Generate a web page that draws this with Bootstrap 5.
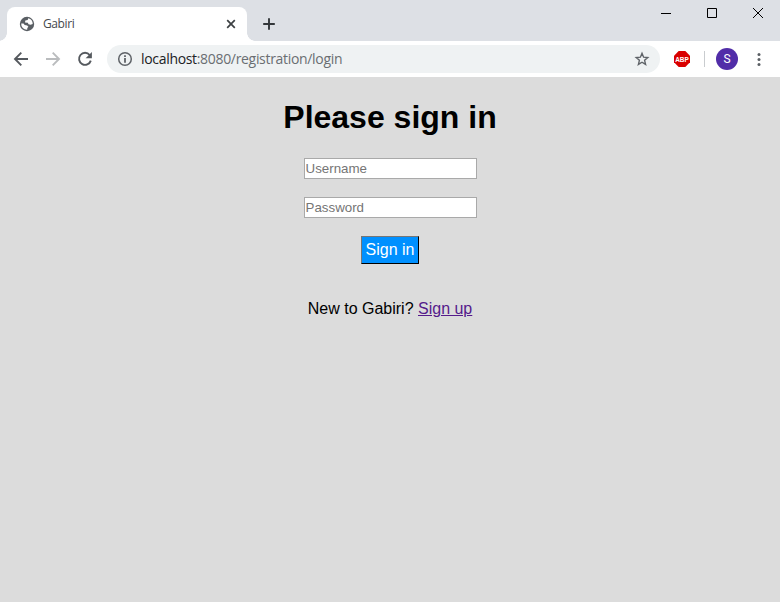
<!DOCTYPE html>
<html lang="en">
<head>
<meta charset="utf-8">
<meta name="viewport" content="width=device-width, initial-scale=1">
<title>Gabiri</title>
<link rel="stylesheet" href="https://cdn.jsdelivr.net/npm/bootstrap@5.3.0/dist/css/bootstrap.min.css">
<style>
html, body { height: 100%; }
body { font-family: "Liberation Sans", Arial, sans-serif; font-size: 16px; line-height: 18px; color: #000; background: #dcdcdc; }
svg { display: block; flex: none; }
.ui-btn { border: 0; background: none; padding: 0; flex: none; display: flex; align-items: center; justify-content: center; }
/* tab strip */
.tab-strip { height: 41px; background: #dde0e5; padding-left: 7px; }
.browser-tab { width: 240px; height: 34px; margin-top: 7px; padding: 0 9px 0 12px; background: #fff; border-radius: 8px 8px 0 0; position: relative; }
.browser-tab::before, .browser-tab::after { content: ""; position: absolute; bottom: 0; width: 8px; height: 8px; }
.browser-tab::before { left: -8px; background: radial-gradient(circle at 0 0, transparent 7.5px, #fff 8px); }
.browser-tab::after { right: -8px; background: radial-gradient(circle at 100% 0, transparent 7.5px, #fff 8px); }
.tab-title { font: 12px/16px "Open Sans", "Noto Sans", sans-serif; letter-spacing: -.4px; color: #45494d; margin-left: 8px; }
.tab-close { width: 14px; height: 14px; }
.new-tab { width: 28px; height: 28px; margin: 10px 0 0 8px; }
.win-controls { margin-right: -1px; }
.win-btn { width: 46px; height: 27px; }
/* toolbar */
.tool-bar { height: 36px; background: #fff; padding-left: 5px; }
.tool-btn { width: 32px; height: 28px; }
.omnibox { width: 553px; height: 28px; margin-left: 6px; padding: 0 10px; border-radius: 14px; background: #eff2f3; }
.url-text { font: 14px/20px "Open Sans", "Noto Sans", sans-serif; letter-spacing: -.32px; color: #6a6e72; margin-left: 8px; white-space: nowrap; }
.url-host { color: #202124; }
.ext-btn { margin-left: 14px; }
.tool-rule { width: 1px; height: 16px; background: #c9cccf; margin-left: 14px; }
.avatar { width: 22px; height: 22px; background: #512da8; color: #fff; font: 12px/22px Roboto, sans-serif; margin-left: 11px; }
.menu-btn { margin-left: 13px; }
/* page */
.page-title { font-size: 32px; line-height: 36px; font-weight: 700; margin: 22px 0 23px; }
.text-field { width: 173px; height: 21px; padding: 1px; border: 1px solid #a9a9a9; border-radius: 0; font-size: 13.333px; line-height: 17px; min-height: 0; margin-bottom: 18px; }
.text-field::placeholder { color: #757575; }
.submit-btn { width: 58px; height: 28px; padding: 0; border: 1px solid; border-color: #767676 #000 #000 #767676; border-radius: 0; background: #0090ff; color: #fff; font-size: 16px; line-height: 24px; }
.signup { margin-top: 36px; }
.signup a { color: #551a8b; }
</style>
</head>
<body class="d-flex flex-column overflow-hidden">
<header class="flex-shrink-0">
  <div class="tab-strip d-flex align-items-start">
    <div class="browser-tab d-flex align-items-center">
      <svg width="16" height="16" viewBox="0 0 16 16"><circle cx="8" cy="8" r="7.2" fill="#5a5f64"/><path d="M9.2 2.2 8.7 4.1 6.3 4.5 6 6.4 8.8 6.7 9.5 8.2 11.6 8.7 13.7 8A5.8 5.8 0 0 0 9.2 2.2ZM2.2 7.5A5.8 5.8 0 0 0 8.2 13.8L8.3 12 9.4 10.7 8.2 9.4 5.7 9.1 4.5 7.6Z" fill="#fff"/></svg>
      <span class="tab-title">Gabiri</span>
      <button class="ui-btn tab-close ms-auto" aria-label="Close tab"><svg width="14" height="14" viewBox="0 0 14 14"><path d="M3.2 3.2l7.6 7.6M10.8 3.2l-7.6 7.6" stroke="#3c4043" stroke-width="1.7"/></svg></button>
    </div>
    <button class="ui-btn new-tab" aria-label="New tab"><svg width="14" height="14" viewBox="0 0 14 14"><path d="M7 1.2v11.6M1.2 7h11.6" stroke="#33373a" stroke-width="1.9"/></svg></button>
    <div class="win-controls d-flex ms-auto">
      <button class="ui-btn win-btn" aria-label="Minimize"><svg width="10" height="11"><path d="M0 5.5h10" stroke="#000"/></svg></button>
      <button class="ui-btn win-btn" aria-label="Maximize"><svg width="10" height="11"><path d="M.5.5h9v9h-9z" fill="none" stroke="#000"/></svg></button>
      <button class="ui-btn win-btn" aria-label="Close"><svg width="10" height="11"><path d="M0 0l10 10M10 0L0 10" stroke="#000"/></svg></button>
    </div>
  </div>
  <div class="tool-bar d-flex align-items-center">
    <button class="ui-btn tool-btn" aria-label="Back"><svg width="16" height="16" viewBox="0 0 16 16"><path d="M15 8H2.5M8.3 1.7 2 8l6.3 6.3" fill="none" stroke="#55595e" stroke-width="1.9"/></svg></button>
    <button class="ui-btn tool-btn" aria-label="Forward"><svg width="16" height="16" viewBox="0 0 16 16"><path d="M1 8h12.5M7.7 1.7 14 8l-6.3 6.3" fill="none" stroke="#babcbe" stroke-width="1.9"/></svg></button>
    <button class="ui-btn tool-btn" aria-label="Reload"><svg width="16" height="16" viewBox="0 0 16 16"><path d="M12.7 4A6 6 0 1 0 13.8 9.6" fill="none" stroke="#55595e" stroke-width="1.9"/><path d="M14.9 1v6.3H8.6Z" fill="#55595e"/></svg></button>
    <div class="omnibox d-flex align-items-center flex-shrink-0">
      <svg width="16" height="16" viewBox="0 0 16 16"><circle cx="8" cy="8" r="6.3" fill="none" stroke="#5f6368" stroke-width="1.5"/><path d="M7.1 4.3h1.8v1.7H7.1zM7.1 7h1.8v4.7H7.1z" fill="#5f6368"/></svg>
      <span class="url-text"><span class="url-host">localhost</span>:8080/registration/login</span>
      <svg class="ms-auto" width="16" height="16" viewBox="0 0 16 16"><path d="M8 2.3l1.6 3.9 4.2.3-3.2 2.8 1 4.1L8 11.2l-3.6 2.2 1-4.1-3.2-2.8 4.2-.3Z" fill="none" stroke="#5f6368" stroke-width="1.4"/></svg>
    </div>
    <button class="ui-btn ext-btn" aria-label="Adblock Plus"><svg width="16" height="16" viewBox="0 0 16 16" overflow="visible"><path d="M4.7 0h6.6L16 4.7v6.6L11.3 16H4.7L0 11.3V4.7Z" fill="#d90000"/><text x="1.2" y="10.8" textLength="13.6" lengthAdjust="spacingAndGlyphs" font-family="Liberation Sans, sans-serif" font-weight="700" font-size="8" fill="#fff">ABP</text></svg></button>
    <div class="tool-rule"></div>
    <div class="avatar rounded-circle text-center flex-shrink-0">S</div>
    <button class="ui-btn menu-btn" aria-label="Menu"><svg width="16" height="16" viewBox="0 0 16 16"><g fill="#5a5f64"><circle cx="8" cy="3.5" r="1.5"/><circle cx="8" cy="8.5" r="1.5"/><circle cx="8" cy="13.5" r="1.5"/></g></svg></button>
  </div>
</header>
<main class="flex-grow-1 d-flex flex-column align-items-center">
  <h1 class="page-title">Please sign in</h1>
  <form class="d-flex flex-column align-items-center">
    <input class="form-control text-field" type="text" placeholder="Username">
    <input class="form-control text-field" type="password" placeholder="Password">
    <button class="btn submit-btn" type="button">Sign in</button>
  </form>
  <p class="signup mb-0">New to Gabiri? <a href="#">Sign up</a></p>
</main>
<script src="https://cdn.jsdelivr.net/npm/bootstrap@5.3.0/dist/js/bootstrap.bundle.min.js"></script>
</body>
</html>
